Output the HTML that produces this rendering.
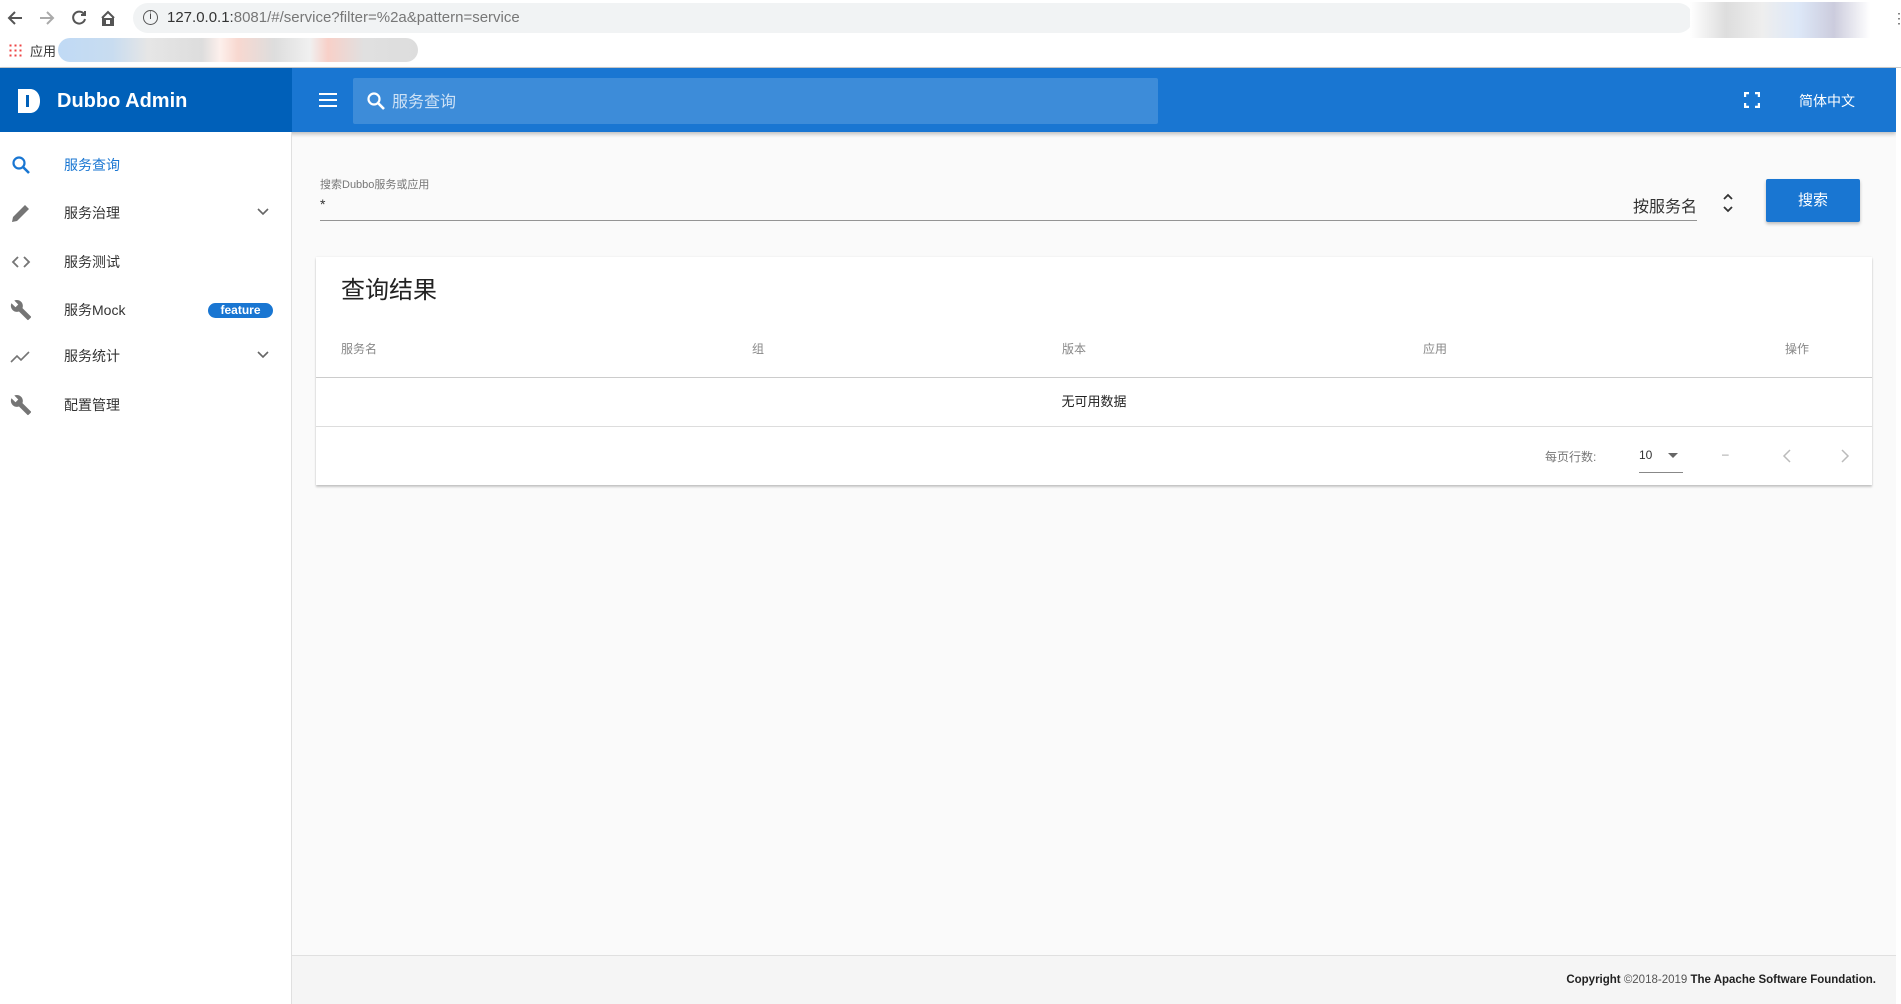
<!DOCTYPE html>
<html><head><meta charset="utf-8"><style>
*{box-sizing:border-box;margin:0;padding:0}
body{width:1901px;height:1004px;overflow:hidden;font-family:"Liberation Sans","Noto Sans CJK SC",sans-serif;background:#fafafa;position:relative;color:#333}
.a{position:absolute}
.chrome{left:0;top:0;width:1901px;height:68px;background:#fff;border-bottom:1px solid #ccc}
.url{left:133px;top:3px;width:1560px;height:30px;border-radius:15px;background:#f1f3f4;font-size:15px;color:#333;line-height:30px;padding-left:34px}
.hdr{left:0;top:68px;width:1896px;height:64px;background:#1976d2;box-shadow:0 2px 4px rgba(0,0,0,.25)}
.logo{left:0;top:0;width:292px;height:64px;background:#0060b9}
.side{left:0;top:132px;width:292px;height:872px;background:#fff;border-right:1px solid #e0e0e0}
.item{position:absolute;left:0;width:292px;height:40px;font-size:14px;line-height:40px}
.item .t{position:absolute;left:64px}
.item svg.i{position:absolute;left:10px;top:9px}
.chev{position:absolute;left:256px;top:14px}
.card{left:316px;top:257px;width:1556px;height:228px;background:#fff;box-shadow:0 2px 2px rgba(0,0,0,.2),0 0 2px rgba(0,0,0,.08)}
.th{position:absolute;top:83px;font-size:12px;color:#888}
.foot{left:292px;top:955px;width:1604px;height:49px;background:#f5f5f5;border-top:1px solid #e0e0e0}
</style></head><body>
<div class="a chrome">
 <svg class="a" style="left:6px;top:8px" width="110" height="20" viewBox="0 0 110 20" fill="none" stroke-width="2"><path d="M16 10H4M9 4L3 10l6 6" stroke="#555"/><path d="M34 10h12M41 4l6 6-6 6" stroke="#aaa"/><path d="M78 6a6 6 0 1 0 1 5M79 3v4h-4" stroke="#555"/><path d="M99 17v-6h6v6M96 10l6-6 6 6M97 9v8h10V9" stroke="#555"/></svg>
 <div class="a url"><span style="position:absolute;left:10px;top:7px;width:15px;height:15px;border:1.5px solid #555;border-radius:50%;font-size:10px;line-height:12px;text-align:center">i</span>127.0.0.1:<span style="color:#777">8081/#/service?filter=%2a&amp;pattern=service</span></div>
 <div class="a" style="left:1690px;top:2px;width:180px;height:36px;background:linear-gradient(90deg,#fff,#ddd 20%,#eee 40%,#dde8f8 60%,#ccd 80%,#fff)"></div>
 <div class="a" style="left:1892px;top:10px;font-size:14px;color:#555">⋮</div>
 <div class="a" style="left:8px;top:43px;width:14px;height:14px;background:radial-gradient(circle,#e44 30%,transparent 31%) 0 0/5px 5px"></div>
 <div class="a" style="left:30px;top:41px;font-size:13px">应用</div>
 <div class="a" style="left:58px;top:38px;width:360px;height:24px;border-radius:12px;background:linear-gradient(90deg,#c0daf5,#c8dcf0 15%,#e6e6e6 25%,#ddd 40%,#fdf0ec 45%,#f8d8d0 50%,#ddd 60%,#f0f0f0 70%,#f8d0c8 75%,#e0e0e0 85%,#ddd)"></div>
</div>
<div class="a hdr">
 <div class="a logo">
  <svg class="a" style="left:18px;top:21px" width="22" height="24" viewBox="0 0 22 24"><path d="M0 0h12c6 0 10 5 10 12s-4 12-10 12H0z" fill="#fff"/><path d="M8 6h3v12H8z" fill="#0060b9"/></svg>
  <div class="a" style="left:57px;top:22px;color:#fff;font-size:20px;font-weight:bold">Dubbo Admin</div>
 </div>
 <svg class="a" style="left:318px;top:23px" width="20" height="18" viewBox="0 0 20 18"><path d="M1 3h18M1 9h18M1 15h18" stroke="#fff" stroke-width="2"/></svg>
 <div class="a" style="left:353px;top:10px;width:805px;height:46px;background:rgba(255,255,255,.16);border-radius:2px">
  <svg class="a" style="left:13px;top:13px" width="20" height="20" viewBox="0 0 20 20"><circle cx="8" cy="8" r="5.5" stroke="#fff" stroke-width="2.2" fill="none"/><path d="M12 12l6 6" stroke="#fff" stroke-width="2.6"/></svg>
  <div class="a" style="left:39px;top:10px;color:rgba(255,255,255,.75);font-size:16px">服务查询</div>
 </div>
 <svg class="a" style="left:1744px;top:24px" width="16" height="16" viewBox="0 0 16 16" fill="none" stroke="#fff" stroke-width="2.4"><path d="M1 5V1h4M11 1h4v4M15 11v4h-4M5 15H1v-4"/></svg>
 <div class="a" style="left:1799px;top:23px;color:#fff;font-size:14px">简体中文</div>
</div>
<div class="a side">
 <div class="item" style="top:13px;color:#1976d2"><svg class="i" width="22" height="22" viewBox="0 0 22 22"><circle cx="9" cy="9" r="5.5" stroke="#1976d2" stroke-width="2.2" fill="none"/><path d="M13 13l6 6" stroke="#1976d2" stroke-width="2.6"/></svg><span class="t">服务查询</span></div>
 <div class="item" style="top:61px"><svg class="i" width="22" height="22" viewBox="0 0 22 22"><path d="M2 20l1-5L15 3l4 4L7 19z" fill="#757575"/></svg><span class="t">服务治理</span><svg class="chev" width="14" height="10" viewBox="0 0 14 10"><path d="M2 2l5 5 5-5" stroke="#666" stroke-width="1.6" fill="none"/></svg></div>
 <div class="item" style="top:110px"><svg class="i" width="22" height="22" viewBox="0 0 22 22"><path d="M8 6l-5 5 5 5M14 6l5 5-5 5" stroke="#757575" stroke-width="1.8" fill="none"/></svg><span class="t">服务测试</span></div>
 <div class="item" style="top:158px"><svg class="i" width="22" height="22" viewBox="0 0 24 24"><path d="M22.7 19l-9.1-9.1c.9-2.3.4-5-1.5-6.9-2-2-5-2.4-7.4-1.3L9 6 6 9 1.6 4.7C.4 7.1.9 10.1 2.9 12.1c1.9 1.9 4.6 2.4 6.9 1.5l9.1 9.1c.4.4 1 .4 1.4 0l2.3-2.3c.5-.4.5-1.1.1-1.4z" fill="#757575"/></svg><span class="t">服务Mock</span><span style="position:absolute;left:208px;top:13px;width:65px;height:15px;border-radius:8px;background:#1976d2;color:#fff;font-size:12px;font-weight:bold;line-height:15px;text-align:center">feature</span></div>
 <div class="item" style="top:204px"><svg class="i" width="22" height="22" viewBox="0 0 22 22"><path d="M1 17l6-6 4 4 8-8" stroke="#757575" stroke-width="1.6" fill="none"/></svg><span class="t">服务统计</span><svg class="chev" width="14" height="10" viewBox="0 0 14 10"><path d="M2 2l5 5 5-5" stroke="#666" stroke-width="1.6" fill="none"/></svg></div>
 <div class="item" style="top:253px"><svg class="i" width="22" height="22" viewBox="0 0 24 24"><path d="M22.7 19l-9.1-9.1c.9-2.3.4-5-1.5-6.9-2-2-5-2.4-7.4-1.3L9 6 6 9 1.6 4.7C.4 7.1.9 10.1 2.9 12.1c1.9 1.9 4.6 2.4 6.9 1.5l9.1 9.1c.4.4 1 .4 1.4 0l2.3-2.3c.5-.4.5-1.1.1-1.4z" fill="#757575"/></svg><span class="t">配置管理</span></div>
</div>
<div class="a" style="left:320px;top:176px;font-size:11px;color:#777">搜索Dubbo服务或应用</div>
<div class="a" style="left:320px;top:196px;font-size:14px;color:#333">*</div>
<div class="a" style="left:320px;top:220px;width:1377px;height:1px;background:#949494"></div>
<div class="a" style="left:1620px;top:193px;width:77px;text-align:right;font-size:16px;color:#333">按服务名</div>
<svg class="a" style="left:1721px;top:192px" width="14" height="22" viewBox="0 0 14 22"><path d="M3 7l4-4 4 4M3 15l4 4 4-4" stroke="#333" stroke-width="1.8" fill="none"/></svg>
<div class="a" style="left:1766px;top:179px;width:94px;height:43px;background:#1976d2;border-radius:2px;box-shadow:0 2px 3px rgba(0,0,0,.25);color:#fff;font-size:15px;line-height:43px;text-align:center">搜索</div>
<div class="a card">
 <div class="a" style="left:25px;top:13px;font-size:24px;color:#222">查询结果</div>
 <div class="th" style="left:25px">服务名</div>
 <div class="th" style="left:436px">组</div>
 <div class="th" style="left:746px">版本</div>
 <div class="th" style="left:1107px">应用</div>
 <div class="th" style="left:1469px">操作</div>
 <div class="a" style="left:0;top:120px;width:1556px;height:1px;background:#ccc"></div>
 <div class="a" style="left:0;top:134px;width:1556px;text-align:center;font-size:13px;color:#222">无可用数据</div>
 <div class="a" style="left:0;top:169px;width:1556px;height:1px;background:#ddd"></div>
 <div class="a" style="left:1229px;top:191px;font-size:12px;color:#777">每页行数:</div>
 <div class="a" style="left:1323px;top:191px;font-size:12px;color:#333">10</div>
 <svg class="a" style="left:1351px;top:195px" width="12" height="8"><path d="M1 1h10L6 6z" fill="#666"/></svg>
 <div class="a" style="left:1323px;top:215px;width:44px;height:1px;background:#888"></div>
 <div class="a" style="left:1406px;top:190px;font-size:12px;color:#999">–</div>
 <svg class="a" style="left:1466px;top:192px" width="10" height="14"><path d="M8 1L2 7l6 6" stroke="#bbb" stroke-width="1.5" fill="none"/></svg>
 <svg class="a" style="left:1524px;top:192px" width="10" height="14"><path d="M2 1l6 6-6 6" stroke="#bbb" stroke-width="1.5" fill="none"/></svg>
</div>
<div class="a foot"><div class="a" style="right:20px;top:18px;font-size:11.5px;font-weight:bold;color:#222">Copyright <span style="font-weight:normal;color:#555">©2018-2019</span> The Apache Software Foundation.</div></div>
<div class="a" style="left:1896px;top:68px;width:5px;height:936px;background:#fff"></div>
</body></html>
